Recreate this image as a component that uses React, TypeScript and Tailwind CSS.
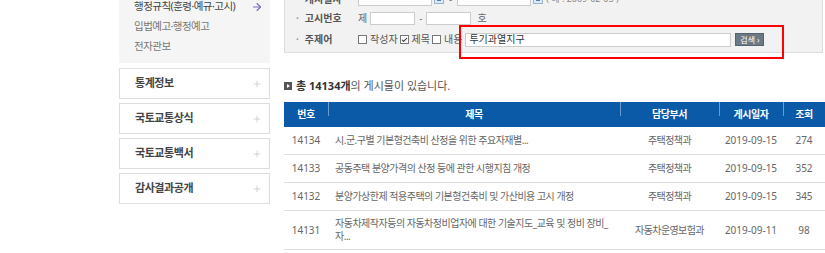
import { ArrowRight, Plus, Check } from "lucide-react"

const font = { fontFamily: '"Noto Sans", "Noto Sans CJK KR", sans-serif' }

const menus = ["통계정보", "국토교통상식", "국토교통백서", "감사결과공개"]

const rows = [
  { no: "14134", title: "시.군.구별 기본형건축비 산정을 위한 주요자재별...", dept: "주택정책과", date: "2019-09-15", hit: "274" },
  { no: "14133", title: "공동주택 분양가격의 산정 등에 관한 시행지침 개정", dept: "주택정책과", date: "2019-09-15", hit: "352" },
  { no: "14132", title: "분양가상한제 적용주택의 기본형건축비 및 가산비용 고시 개정", dept: "주택정책과", date: "2019-09-15", hit: "345" },
  { no: "14131", title: "자동차제작자등의 자동차정비업자에 대한 기술지도_교육 및 정비 장비_자...", dept: "자동차운영보험과", date: "2019-09-11", hit: "98" },
  { no: "14130", title: "자동차제작자등의 자동차정비업자에 대한 교육 현황 개정", dept: "자동차운영보험과", date: "2019-09-11", hit: "87" },
]

function CalIcon() {
  return (
    <span className="w-[10px] h-[10px] border border-[#9db3c9] bg-[#dce8f3] flex items-center justify-center">
      <span className="w-[4px] h-[4px] bg-[#4a7fb5]" />
    </span>
  )
}

function Box({ checked, label }: { checked?: boolean; label: string }) {
  return (
    <label className="flex items-center gap-[3px] mr-[2px]">
      <span className="w-[9px] h-[9px] border border-[#777] bg-white flex items-center justify-center">
        {checked && <Check className="w-[8px] h-[8px] text-[#333]" strokeWidth={3.5} />}
      </span>
      <span className="text-[10px] text-[#555] whitespace-nowrap">{label}</span>
    </label>
  )
}

export default function App() {
  return (
    <div className="w-[825px] h-[253px] overflow-hidden bg-white" style={font}>
      <div className="flex gap-[14px] pl-[119px] -mt-[14px]">
        {/* 좌측 메뉴 */}
        <div className="w-[151px] shrink-0">
          <div className="bg-[#f5f5f5] pt-[11px] pb-[7px] pl-[15px] pr-[7px]">
            <div className="h-[20px] flex items-center justify-between text-[10.5px] text-[#444] whitespace-nowrap tracking-[-0.05em]">
              <span>행정규칙(훈령·예규·고시)</span>
              <ArrowRight className="w-[12px] h-[12px] text-[#7a6cc0]" strokeWidth={2.2} />
            </div>
            <div className="h-[20px] flex items-center text-[10.5px] text-[#777] whitespace-nowrap tracking-[-0.05em]">입법예고·행정예고</div>
            <div className="h-[19px] flex items-center text-[10.5px] text-[#777] tracking-[-0.05em]">전자관보</div>
          </div>
          <div className="mt-[5px] flex flex-col gap-[4px]">
            {menus.map((m) => (
              <div key={m} className="h-[31px] border border-[#ddd] flex items-center justify-between pl-[15px] pr-[7px]">
                <span className="text-[11px] font-bold text-[#444] tracking-[-0.04em]">{m}</span>
                <Plus className="w-[10px] h-[10px] text-[#bbb]" strokeWidth={1.5} />
              </div>
            ))}
          </div>
        </div>

        {/* 본문 */}
        <div className="w-[541px] shrink-0">
          <div className="w-[539px] border border-[#ddd] bg-[#f2f2f2] pt-[3px] pb-[1px] text-[10px] text-[#444]">
            <div className="h-[18px] flex items-center">
              <span className="w-[73px] pl-[11px] flex items-center gap-[6px] font-bold text-[#555]"><span className="text-[#999]">·</span>게시일자</span>
              <span className="w-[74px] h-[13px] border border-[#ccc] bg-white" />
              <span className="ml-[2px]"><CalIcon /></span>
              <span className="mx-[5px] text-[#777]">-</span>
              <span className="w-[74px] h-[13px] border border-[#ccc] bg-white" />
              <span className="ml-[2px]"><CalIcon /></span>
              <span className="ml-[3px] text-[9px] text-[#888]">( 예 : 2009-02-05 )</span>
            </div>
            <div className="h-[20px] flex items-center">
              <span className="w-[73px] pl-[11px] flex items-center gap-[6px] font-bold text-[#555]"><span className="text-[#999]">·</span>고시번호</span>
              <span className="text-[#666] mr-[3px]">제</span>
              <span className="w-[45px] h-[13px] border border-[#ccc] bg-white" />
              <span className="mx-[4px] text-[#777]">-</span>
              <span className="w-[45px] h-[13px] border border-[#ccc] bg-white" />
              <span className="ml-[6px] text-[#666]">호</span>
            </div>
            <div className="h-[23px] flex items-center">
              <span className="w-[73px] pl-[11px] flex items-center gap-[6px] font-bold text-[#555]"><span className="text-[#999]">·</span>주제어</span>
              <Box label="작성자" />
              <Box checked label="제목" />
              <Box label="내용" />
              <div className="relative ml-[1px]">
                <span className="absolute -left-[6px] -top-[8px] w-[325px] h-[34px] border-2 border-[#ff0000] z-10" />
                <div className="flex items-center">
                  <span className="w-[266px] h-[14px] border border-[#ccc] bg-white flex items-center pl-[3px] text-[10px] text-[#333]">투기과열지구</span>
                  <span className="ml-[4px] w-[29px] h-[13px] bg-[#6b7886] border border-[#56626e] flex items-center justify-center text-[8px] text-white">검색 ›</span>
                </div>
              </div>
            </div>
          </div>

          <div className="mt-[25px] h-[16px] flex items-center gap-[4px] text-[11px] text-[#555]">
            <span className="w-[8px] h-[8px] bg-[#555] flex items-center justify-center">
              <span className="w-0 h-0 border-y-[2.5px] border-y-transparent border-l-[3px] border-l-white ml-[1px]" />
            </span>
            <span>
              <b className="text-[#333]">총 14134개</b>의 게시물이 있습니다.
            </span>
          </div>

          <table className="mt-[8px] w-[541px] table-fixed border-collapse text-[10px]">
            <colgroup>
              <col className="w-[44px]" />
              <col className="w-[292px]" />
              <col className="w-[99px]" />
              <col className="w-[64px]" />
              <col className="w-[42px]" />
            </colgroup>
            <thead>
              <tr className="bg-[#0b5aa8] text-white h-[25px]">
                {["번호", "제목", "담당부서", "게시일자", "조회"].map((h, i) => (
                  <th key={h} className="relative font-bold text-[10px] p-0 tracking-[-0.04em]">
                    {h}
                    {i > 0 && <span className="absolute left-0 top-0 w-px h-[14px] bg-[#6d9bd0]" />}
                  </th>
                ))}
              </tr>
            </thead>
            <tbody className="text-[#666]">
              {rows.map((r) => (
                <tr key={r.no} className="border-b border-[#ddd]">
                  <td className="text-center py-[6px]">{r.no}</td>
                  <td className="pl-[7px] pr-[1px] py-[6px] leading-[13px] text-[10px] tracking-[-0.05em]">{r.title}</td>
                  <td className="text-center tracking-[-0.06em]">{r.dept}</td>
                  <td className="text-center">{r.date}</td>
                  <td className="text-center">{r.hit}</td>
                </tr>
              ))}
            </tbody>
          </table>
        </div>
      </div>
    </div>
  )
}
